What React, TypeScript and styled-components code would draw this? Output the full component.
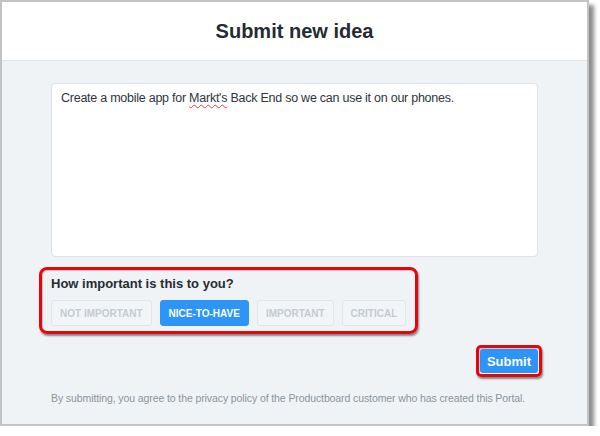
import React from "react";
import styled, { createGlobalStyle } from "styled-components";

const Global = createGlobalStyle`
  html, body { margin: 0; padding: 0; background: #ffffff; }
  body { font-family: "Liberation Sans", Arial, sans-serif; }
  * { box-sizing: border-box; }
`;

const Frame = styled.div`
  width: 589px;
  height: 426px;
  border: 2px solid #c3c3c3;
  background: #f0f3f6;
  box-shadow: 5px 5px 4px rgba(0, 0, 0, 0.45);
  display: flex;
  flex-direction: column;
`;

const Header = styled.header`
  height: 59px;
  flex: none;
  background: #ffffff;
  border-bottom: 1px solid #e3e7ec;
  display: flex;
  align-items: center;
  justify-content: center;
`;

const Title = styled.h1`
  margin: 0;
  font-size: 20px;
  font-weight: 700;
  color: #262b31;
  letter-spacing: 0;
`;

const Body = styled.main`
  flex: 1;
  padding: 22px 49px 0;
  display: flex;
  flex-direction: column;
`;

const TextBox = styled.div`
  height: 174px;
  background: #ffffff;
  border: 1px solid #dde2e8;
  border-radius: 4px;
  padding: 6px 9px;
  font-size: 12.5px;
  letter-spacing: -0.25px;
  line-height: 16px;
  color: #2f353c;
`;

const Misspelled = styled.span`
  text-decoration: underline wavy #e0463c;
  text-decoration-thickness: 1px;
  text-underline-offset: 2px;
`;

const Importance = styled.section`
  position: relative;
  width: fit-content;
  margin-top: 19px;
  display: flex;
  flex-direction: column;
  gap: 8px;
`;

const Callout = styled.div<{ $radius: number; $inset: string }>`
  position: absolute;
  inset: ${(p) => p.$inset};
  border: 3px solid #e3060c;
  border-radius: ${(p) => p.$radius}px;
  box-shadow: 1px 2px 2px rgba(0, 0, 0, 0.45), inset 1px 1px 1px rgba(0, 0, 0, 0.2);
  pointer-events: none;
`;

const Label = styled.div`
  font-size: 13px;
  line-height: 16px;
  font-weight: 700;
  color: #262b31;
`;

const Options = styled.div`
  display: flex;
  gap: 8px;
`;

const Option = styled.button<{ $active?: boolean }>`
  height: 26px;
  padding: 0 8px;
  border: 1px solid ${(p) => (p.$active ? "#2c95f7" : "#e1e5ea")};
  border-radius: 3px;
  background: ${(p) => (p.$active ? "#2c95f7" : "#f2f5f8")};
  color: ${(p) => (p.$active ? "#ffffff" : "#c6cbd1")};
  font-family: "Liberation Sans", Arial, sans-serif;
  font-size: 10px;
  font-weight: 700;
  text-transform: uppercase;
  cursor: pointer;
`;

const Actions = styled.div`
  margin-top: 23px;
  display: flex;
  justify-content: flex-end;
`;

const SubmitWrap = styled.div`
  position: relative;
`;

const SubmitButton = styled.button`
  height: 24px;
  padding: 0 7px;
  border: none;
  border-radius: 3px;
  background: #2c95f7;
  color: #ffffff;
  font-family: "Liberation Sans", Arial, sans-serif;
  font-size: 13px;
  font-weight: 700;
  display: block;
`;

const Footer = styled.p`
  margin: 18px 0 0;
  font-size: 10.5px;
  letter-spacing: -0.1px;
  line-height: 14px;
  color: #8b939c;
`;

const options = ["Not important", "Nice-to-have", "Important", "Critical"];

export default function App() {
  return (
    <>
      <Global />
      <Frame>
        <Header>
          <Title>Submit new idea</Title>
        </Header>
        <Body>
          <TextBox>
            Create a mobile app for <Misspelled>Markt's</Misspelled> Back End so we can use it on our phones.
          </TextBox>
          <Importance>
            <Label>How important is this to you?</Label>
            <Options>
              {options.map((o) => (
                <Option key={o} $active={o === "Nice-to-have"}>
                  {o}
                </Option>
              ))}
            </Options>
            <Callout $radius={8} $inset="-9px -12px -8px -12px" />
          </Importance>
          <Actions>
            <SubmitWrap>
              <SubmitButton>Submit</SubmitButton>
              <Callout $radius={5} $inset="-4px -4px -4px -4px" />
            </SubmitWrap>
          </Actions>
          <Footer>
            By submitting, you agree to the privacy policy of the Productboard customer who has created this Portal.
          </Footer>
        </Body>
      </Frame>
    </>
  );
}
